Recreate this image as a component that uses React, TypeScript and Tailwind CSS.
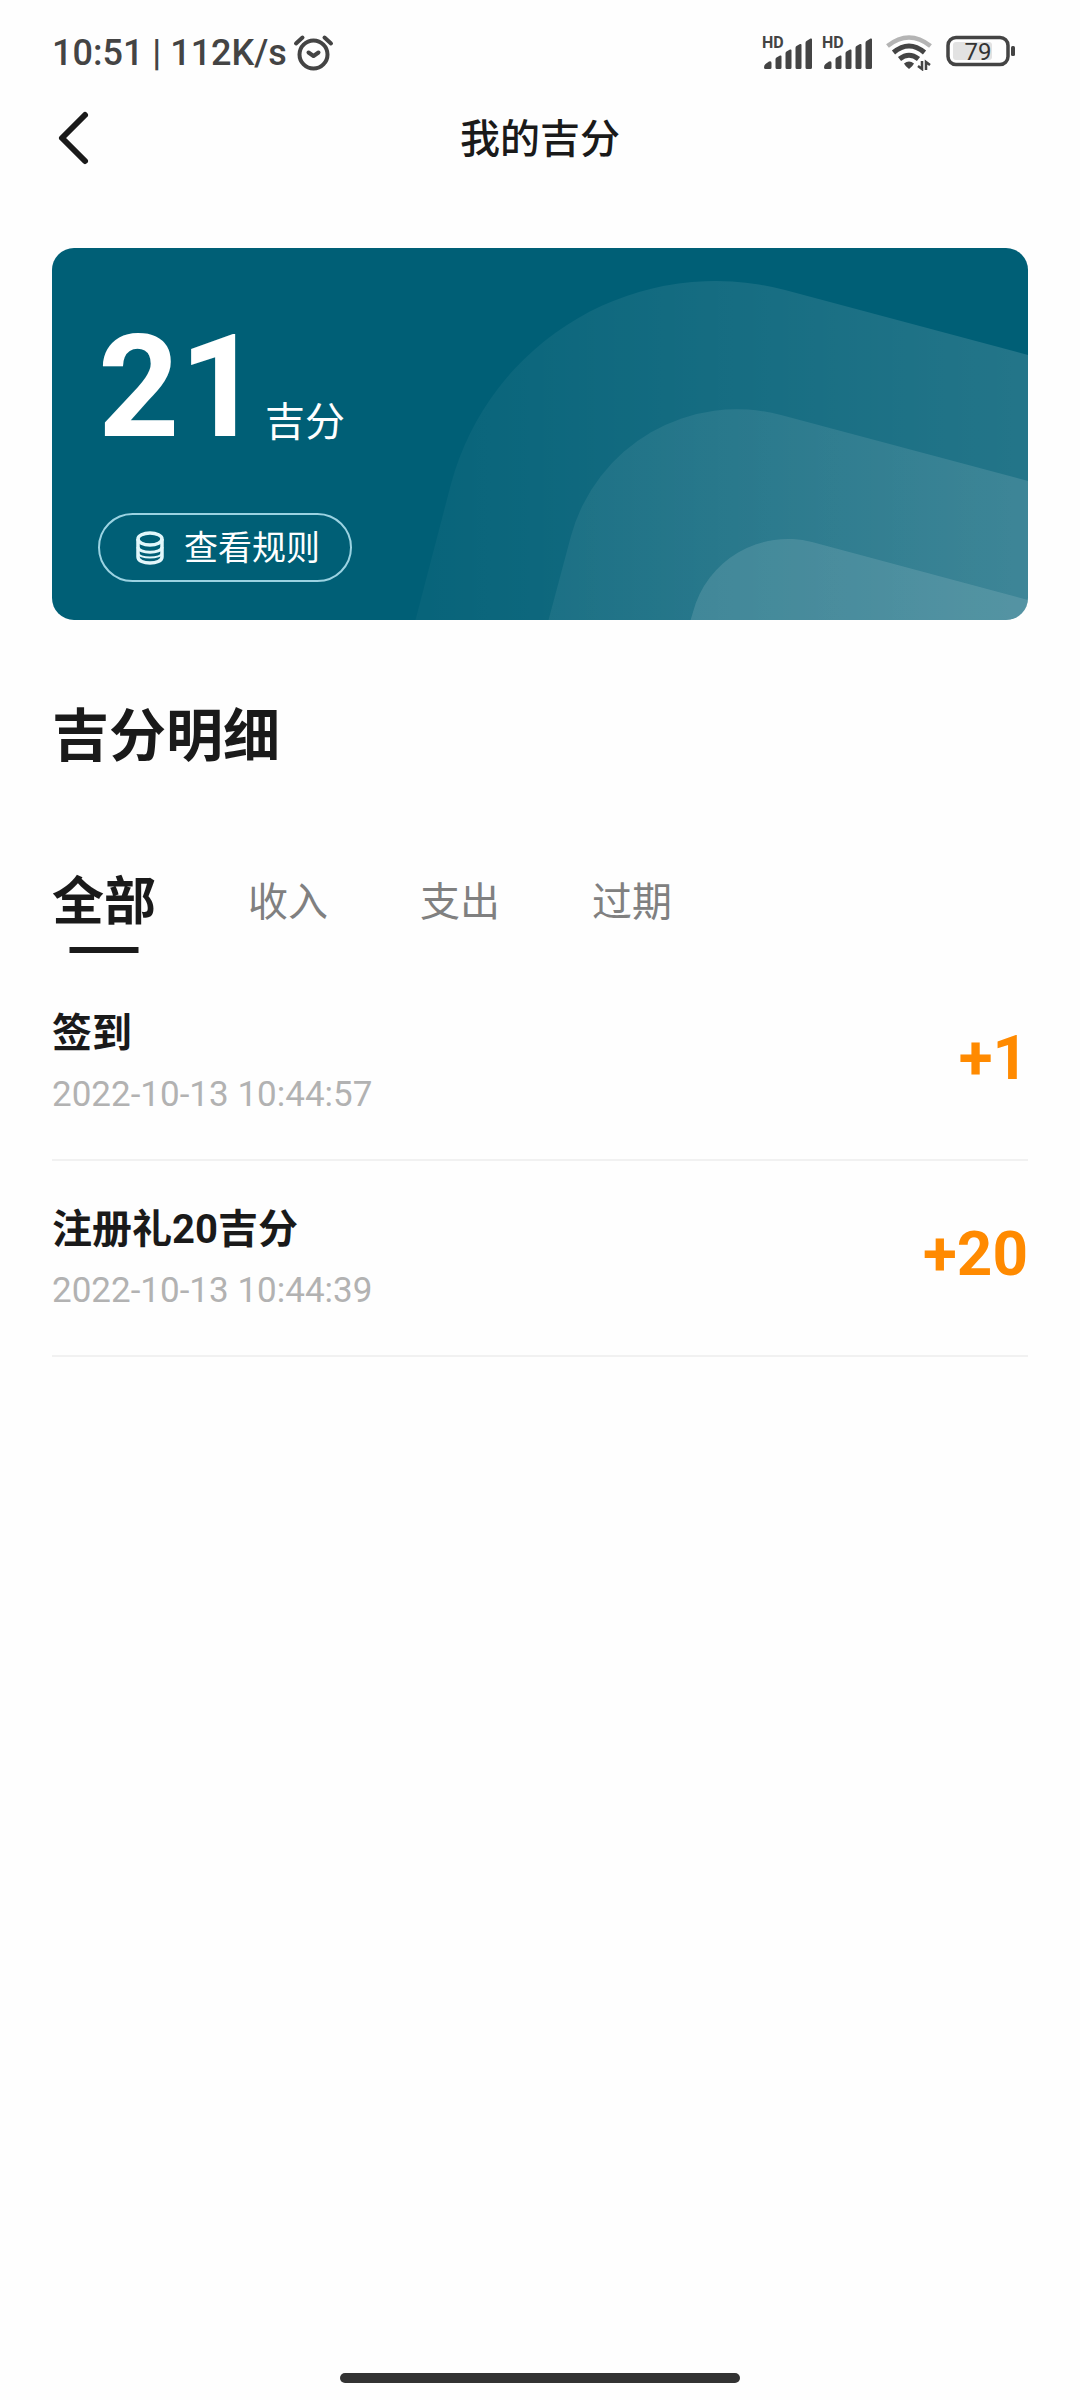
import { useState } from "react";

const tabs = ["全部", "收入", "支出", "过期"];

const records = [
    { title: "签到", time: "2022-10-13 10:44:57", amount: "+1" },
    { title: "注册礼20吉分", time: "2022-10-13 10:44:39", amount: "+20" },
];

function AlarmIcon() {
    return (
        <svg width="41" height="38" viewBox="0 0 41 38" fill="none" stroke="#444" strokeWidth="4" strokeLinecap="round" strokeLinejoin="round">
            <circle cx="20.5" cy="20.5" r="14" />
            <path d="M3 9.5 L9.5 3.5 M31.5 3.5 L38 9.5" />
            <path d="M15.5 18.5 L20.5 22 L25.5 18.5" />
        </svg>
    );
}

function SignalIcon() {
    return (
        <svg width="52" height="38" viewBox="0 -4 52 38" fill="#444">
            <text x="0" y="12" fontSize="16" fontWeight="700">HD</text>
            <path d="M2 31.500 q0 -2.500 1.500 -3.500 l3.500 -2.500 q2.500 -1 2.500 1.500 v4.500 q0 1.500 -1.500 1.500 h-4.500 q-1.500 0 -1.500 -1.500z" />
            <path d="M13.500 23.500 q0 -1.500 1 -2 l3.500 -2 q1.500 -.5 1.500 1 v11 q0 1.500 -1.500 1.500 h-3 q-1.500 0 -1.500 -1.500z" />
            <path d="M23.500 17.500 q0 -1.500 1 -2 l3.500 -2 q1.500 -.5 1.500 1 v17 q0 1.500 -1.500 1.500 h-3 q-1.500 0 -1.500 -1.500z" />
            <path d="M33.500 12 q0 -1.500 1 -2 l3.500 -2 q1.500 -.5 1.500 1 v22.500 q0 1.500 -1.500 1.500 h-3 q-1.500 0 -1.500 -1.500z" />
            <path d="M43.500 7 q0 -1.500 1 -2 l4 -2.500 q1.500 -.5 1.500 1 v28 q0 1.500 -1.500 1.500 h-3.500 q-1.500 0 -1.500 -1.500z" />
        </svg>
    );
}

function WifiIcon() {
    return (
        <svg width="46" height="36" viewBox="0 0 46 36" fill="none" strokeWidth="4.500">
            <path d="M1.500 11 Q23 -6 44.500 11" stroke="#b4b4b4" />
            <path d="M7.500 17.500 Q23 4.500 38.500 17.500" stroke="#444" strokeWidth="5" />
            <path d="M13.500 24 Q23 16.500 32.500 24" stroke="#444" strokeWidth="5" />
            <path d="M18 28.500 Q23 24.500 28 28.500 Q27 31 23 34 Q19 31 18 28.500 Z" fill="#444" stroke="none" />
            <path d="M36 26 V34 L32 31 M40 35 V27 L44 30" stroke="#444" strokeWidth="2.500" />
        </svg>
    );
}

function BatteryIcon() {
    return (
        <svg width="70" height="32" viewBox="0 0 70 32">
            <rect x="2" y="2.500" width="60" height="27" rx="8" fill="none" stroke="#444" strokeWidth="3.500" />
            <rect x="7" y="7" width="39" height="18" rx="3" fill="#e2e2e2" />
            <rect x="65" y="11" width="4" height="10" rx="1.500" fill="#444" />
            <text x="32" y="24.500" textAnchor="middle" fontSize="24" fill="#333">79</text>
        </svg>
    );
}

function CoinsIcon() {
    return (
        <svg width="28" height="34" viewBox="0 0 28 34" fill="none" stroke="#e2f7fb" strokeWidth="3.500">
            <ellipse cx="14" cy="8" rx="12" ry="6" />
            <path d="M2 8 V26 C2 34 26 34 26 26 V8" />
            <path d="M2 16 C2 23 26 23 26 16" strokeWidth="3" />
            <path d="M2 22 C2 28 26 28 26 22" strokeWidth="2" />
        </svg>
    );
}

function CardWaves() {
    return (
        <svg className="absolute right-0 top-0 h-full" viewBox="360 0 617 372">
            <defs>
                <linearGradient id="wave1">
                    <stop offset="0" stopColor="#fff" stopOpacity=".03" />
                    <stop offset="1" stopColor="#fff" stopOpacity=".14" />
                </linearGradient>
                <linearGradient id="wave2">
                    <stop offset="0" stopColor="#fff" stopOpacity=".06" />
                    <stop offset="1" stopColor="#fff" stopOpacity=".12" />
                </linearGradient>
            </defs>
            <path fill="url(#wave1)" d="M364 374 L400 236 A274 274 0 0 1 734 42 L977 107 V374 Z" />
            <path fill="url(#wave2)" d="M497 374 L520 288 A172 172 0 0 1 730 167 L977 233 V374 Z" />
            <path fill="#fff" fillOpacity=".12" d="M639 374 L642 364 A98 98 0 0 1 761 294 L977 352 V374 Z" />
        </svg>
    );
}

export default function App() {
    const [active, setActive] = useState("全部");

    return (
        <div className="flex min-h-screen flex-col bg-[#fefefe] text-[#1a1a1a] font-[Roboto,'Noto_Sans_CJK_SC',sans-serif]">
            <div className="flex h-[106px] items-center justify-between pl-[52px] pr-16 text-[#444]">
                <div className="flex items-center gap-[6px]">
                    <span className="text-[36px] leading-[44px] font-medium">10:51 | 112K/s</span>
                    <AlarmIcon />
                </div>
                <div className="flex items-center">
                    <div className="flex gap-2 pb-1">
                        <SignalIcon />
                        <SignalIcon />
                    </div>
                    <div className="flex gap-[14px] pl-3">
                        <WifiIcon />
                        <BatteryIcon />
                    </div>
                </div>
            </div>

            <header className="grid h-16 grid-cols-3 items-center px-[52px]">
                <button aria-label="返回" className="w-fit py-1 pl-1">
                    <svg width="40" height="56" viewBox="0 0 40 56" fill="none" stroke="#1a1a1a" strokeWidth="6" strokeLinecap="round" strokeLinejoin="round">
                        <path d="M29 5 L6 28 L29 51" />
                    </svg>
                </button>
                <h1 className="pt-1 text-center text-[40px] leading-[56px] font-medium">我的吉分</h1>
            </header>

            <main className="px-[52px] pt-[78px]">
                <section className="relative h-[372px] overflow-hidden rounded-[22px] bg-[#005f76] pl-[46px] pt-[70px] text-white">
                    <CardWaves />
                    <div className="relative flex items-baseline gap-1">
                        <span className="text-[142px] leading-[140px] font-bold">21</span>
                        <span className="text-[40px] leading-[56px]">吉分</span>
                    </div>
                    <button className="relative mt-[55px] flex h-[69px] w-[254px] items-center gap-5 rounded-full border-2 border-[#9bd3e2] pl-9 text-[34px] leading-[44px]">
                        <CoinsIcon />
                        查看规则
                    </button>
                </section>

                <h2 className="mt-[77px] text-[57px] leading-[80px] font-bold">吉分明细</h2>

                <nav className="mt-[94px] flex gap-[92px]">
                    {tabs.map((tab) => (
                        <button
                            key={tab}
                            onClick={() => setActive(tab)}
                            className={
                                tab === active
                                    ? "relative h-[82px] pb-[18px] text-[52px] leading-[64px] font-bold"
                                    : "relative h-[82px] pb-[18px] text-[40px] leading-[64px] text-[#808080]"
                            }
                        >
                            {tab}
                            {tab === active && <span className="absolute bottom-0 left-1/2 h-[6px] w-[69px] -translate-x-1/2 bg-[#1a1a1a]" />}
                        </button>
                    ))}
                </nav>

                <ul className="mt-3">
                    {records.map((item) => (
                        <li key={item.time} className="flex items-start justify-between border-b-2 border-[#f1f1f1] pb-[42px] pt-[41px]">
                            <div className="flex flex-col gap-[11px]">
                                <h3 className="text-[40px] leading-[56px] font-bold">{item.title}</h3>
                                <time className="text-[35px] leading-[44px] text-[#b2b2b2]">{item.time}</time>
                            </div>
                            <span className="pt-3 text-[62px] leading-[80px] font-bold text-[#ff8a00]">{item.amount}</span>
                        </li>
                    ))}
                </ul>
            </main>

            <div className="mx-auto mb-[17px] mt-auto h-[10px] w-[400px] rounded-full bg-[#333]" />
        </div>
    );
}
